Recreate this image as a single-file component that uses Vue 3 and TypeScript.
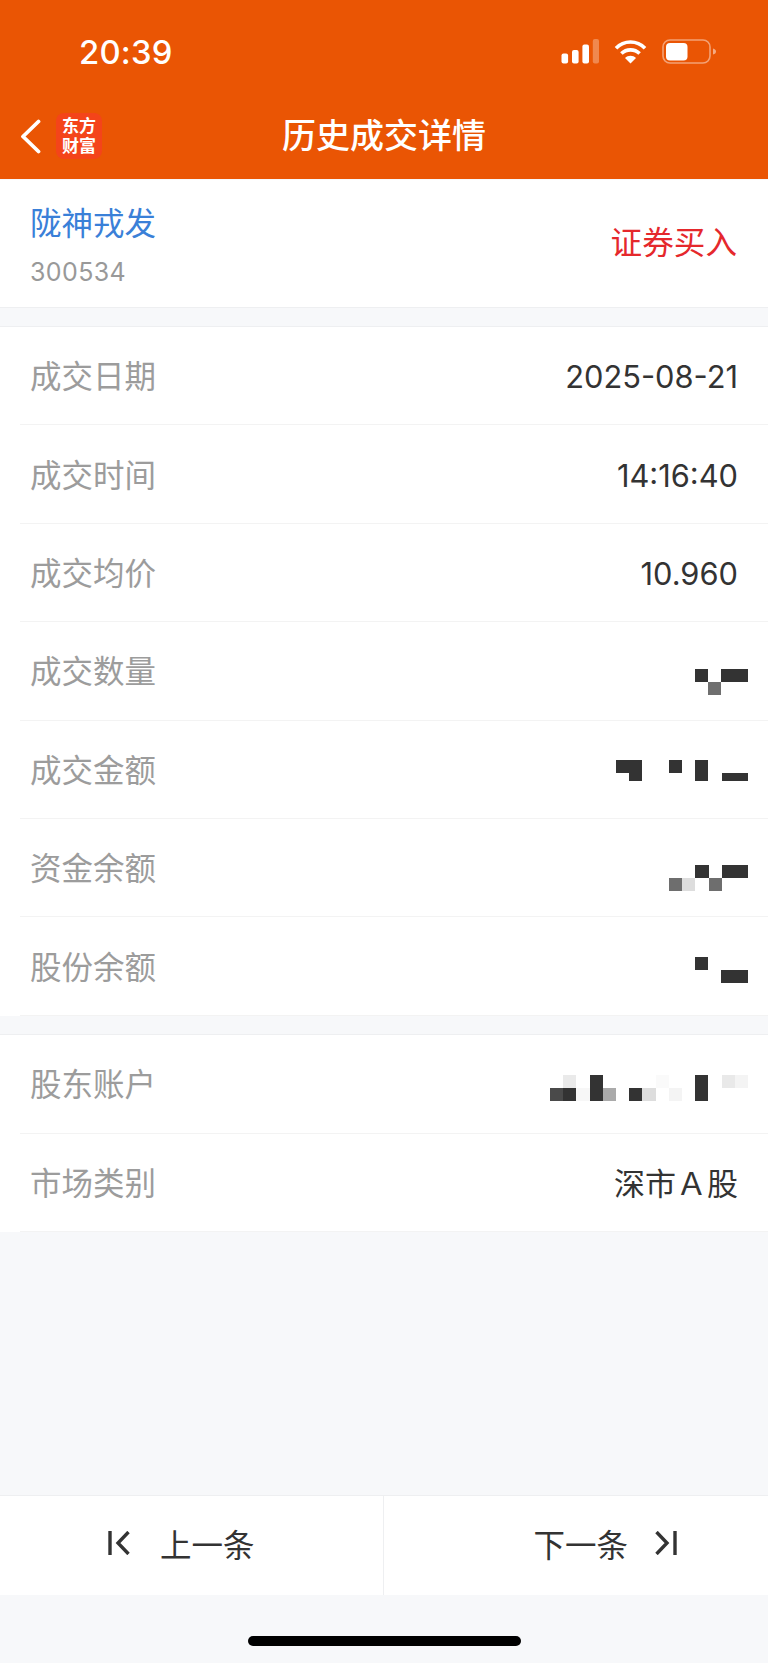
<script setup lang="ts">
type Cell = [number, number, string, number?]
interface Row { label: string; value?: string; cells?: Cell[]; cols?: number; low?: boolean }

const D = '#333333'
const CELL = 13.2
const tradeRows: Row[] = [
  { label: '成交日期', value: '2025-08-21' },
  { label: '成交时间', value: '14:16:40' },
  { label: '成交均价', value: '10.960' },
  { label: '成交数量', cols: 4, low: true, cells: [[3, 0, D], [2, 1, '#6f6f6f'], [1, 0, D], [0, 0, D]] },
  { label: '成交金额', cols: 10, cells: [[9, 0, D], [8, 0, D], [8, 1, D, 8], [5, 0, D], [3, 0, D], [3, 1, D, 8], [1, 1, D, 8], [0, 1, D, 8]] },
  { label: '资金余额', cols: 6, low: true, cells: [[5, 1, '#6e6e6e'], [4, 1, '#dddddd'], [3, 0, D], [2, 1, '#6e6e6e'], [1, 0, D], [0, 0, D]] },
  { label: '股份余额', cols: 4, cells: [[3, 0, D], [1, 1, D], [0, 1, D]] },
]
const accountCells: Cell[] = [
  [14, 1, '#4a4a4a'], [13, 0, '#eaeaea'], [13, 1, D], [12, 1, '#f7f7f7'],
  [11, 0, D], [11, 1, D], [10, 1, '#aaaaaa'],
  [8, 1, D], [7, 1, '#dddddd'], [6, 0, '#fafafa'], [5, 1, '#f4f4f4'],
  [3, 0, D], [3, 1, D], [1, 0, '#e9e9e9'], [0, 0, '#f4f4f4'],
]
const infoRows: Row[] = [
  { label: '股东账户', cols: 15, cells: accountCells },
  { label: '市场类别', value: '深市Ａ股' },
]
</script>

<template>
  <div class="page">
    <header class="top">
      <div class="status">
        <span class="time">20:39</span>
        <div class="status-icons">
          <svg class="signal" width="39" height="25" viewBox="0 0 39 25" fill="#fff">
            <rect x="1.5" y="14.5" width="6.6" height="10" rx="2" />
            <rect x="12" y="11" width="6.6" height="13.5" rx="2" />
            <rect x="22.4" y="5.5" width="6.6" height="19" rx="2" />
            <rect x="32.8" y="0" width="6.2" height="24.5" rx="2" opacity=".3" />
          </svg>
          <svg class="wifi" width="33" height="25" viewBox="0 0 33 25" fill="none" stroke="#fff" stroke-width="3.6">
            <path d="M2 9.2C10 1 23 1 31 9.2" />
            <path d="M7.4 14.6C12.4 9.6 20.6 9.6 25.6 14.6" />
            <path d="M11 19L16.5 24.4L22 19C19 16 14 16 11 19Z" fill="#fff" stroke="none" />
          </svg>
          <svg width="54" height="25" viewBox="0 0 54 25">
            <rect x="1" y="1" width="47" height="23" rx="7" fill="none" stroke="#fff" stroke-opacity=".45" stroke-width="1.6" />
            <rect x="4" y="4" width="21.5" height="17.5" rx="4" fill="#fff" />
            <path d="M51 9.5C53 10 54 11 54 12.5C54 14 53 15 51 15.5Z" fill="#fff" fill-opacity=".5" />
          </svg>
        </div>
      </div>
      <nav class="nav">
        <svg class="back" width="21" height="35" viewBox="0 0 21 35" fill="none" stroke="#fff" stroke-width="3.8" stroke-linecap="round" stroke-linejoin="round">
          <path d="M18.5 2.5L3 17.5L18.5 32.5" />
        </svg>
        <div class="logo"><span>东方</span><span>财富</span></div>
        <h1 class="title">历史成交详情</h1>
      </nav>
    </header>

    <main class="main">
      <section class="stock">
        <div class="stock-id">
          <div class="stock-name">陇神戎发</div>
          <div class="stock-code">300534</div>
        </div>
        <div class="stock-type">证券买入</div>
      </section>

      <section class="card">
        <div v-for="row in tradeRows" :key="row.label" class="row">
          <span class="label">{{ row.label }}</span>
          <span v-if="row.value" class="value">{{ row.value }}</span>
          <svg v-else class="mosaic" :class="{ low: row.low }" :width="(row.cols ?? 0) * CELL" :height="CELL * 2" shape-rendering="crispEdges">
            <rect v-for="(c, i) in row.cells" :key="i"
              :x="((row.cols ?? 0) - 1 - c[0]) * CELL" :y="c[1] * CELL"
              :width="CELL" :height="c[3] ?? CELL" :fill="c[2]" />
          </svg>
        </div>
      </section>

      <section class="card">
        <div v-for="row in infoRows" :key="row.label" class="row">
          <span class="label">{{ row.label }}</span>
          <span v-if="row.value" class="value cjk">{{ row.value }}</span>
          <svg v-else class="mosaic" :class="{ low: row.low }" :width="(row.cols ?? 0) * CELL" :height="CELL * 2" shape-rendering="crispEdges">
            <rect v-for="(c, i) in row.cells" :key="i"
              :x="((row.cols ?? 0) - 1 - c[0]) * CELL" :y="c[1] * CELL"
              :width="CELL" :height="c[3] ?? CELL" :fill="c[2]" />
          </svg>
        </div>
      </section>
    </main>

    <footer class="pager">
      <button class="btn prev">
        <svg width="23" height="24" viewBox="0 0 23 24" fill="none" stroke="#333" stroke-width="3.4">
          <path d="M2 0V24" />
          <path d="M20.5 1L10 12L20.5 23" />
        </svg>
        <span>上一条</span>
      </button>
      <button class="btn next">
        <span>下一条</span>
        <svg width="23" height="24" viewBox="0 0 23 24" fill="none" stroke="#333" stroke-width="3.4">
          <path d="M2.5 1L13 12L2.5 23" />
          <path d="M21 0V24" />
        </svg>
      </button>
    </footer>
    <div class="home-zone"><div class="home-bar"></div></div>
  </div>
</template>

<style>
html, body { margin: 0; background: #f7f8fa; }
</style>

<style scoped>
.page {
  width: 768px;
  height: 1663px;
  display: flex;
  flex-direction: column;
  background: #f7f8fa;
  font-family: Inter, "Noto Sans CJK SC", sans-serif;
  overflow: hidden;
}
.top { height: 179px; background: #ea5504; color: #fff; flex: none; box-sizing: border-box; }
.status { height: 100px; display: flex; justify-content: space-between; padding: 37px 52px 0 79px; box-sizing: border-box; }
.time { font-size: 32.8px; font-weight: 500; line-height: 30px; letter-spacing: .2px; }
.status-icons { display: flex; align-items: flex-start; padding-top: 2px; gap: 15px; }
.nav { position: relative; display: flex; align-items: center; height: 72px; padding-left: 20px; }
.back { flex: none; }
.logo {
  margin-left: 15px;
  width: 46px;
  height: 46px;
  border-radius: 8px;
  background: #f4441a;
  display: flex;
  flex-direction: column;
  align-items: center;
  justify-content: center;
  font-size: 17px;
  line-height: 20px;
  font-weight: 700;
  flex: none;
}
.title {
  position: absolute;
  left: 0;
  right: 0;
  top: 0;
  margin: 0;
  text-align: center;
  font-size: 34px;
  line-height: 72px;
  font-weight: 500;
}
.main { flex: 1; display: flex; flex-direction: column; gap: 18.5px; padding-top: 1px; }
.stock {
  height: 127.5px;
  padding: 0 31px 0 30px;
  background: #fff;
  display: flex;
  align-items: center;
  justify-content: space-between;
  border-bottom: 1px solid #eeeff1;
  box-sizing: border-box;
}
.stock-id { display: flex; flex-direction: column; gap: 10px; margin-top: 4px; }
.stock-name { font-size: 31.5px; line-height: 44px; color: #3a80d8; }
.stock-code { font-size: 25px; line-height: 32px; color: #999; letter-spacing: .4px; }
.stock-type { font-size: 31.6px; line-height: 44px; color: #e5282c; }
.card { background: #fff; padding-left: 20px; border-top: 1px solid #eeeff1; }
.row {
  height: 98.4px;
  padding-right: 30px;
  padding-left: 10px;
  display: flex;
  align-items: center;
  justify-content: space-between;
  border-bottom: 1px solid #f3f3f3;
  box-sizing: border-box;
}
.label { font-size: 31.5px; line-height: 44px; color: #9c9c9c; margin-top: 3px; }
.value { font-size: 30.8px; line-height: 44px; color: #333; margin-top: 3px; }
.value.cjk { font-size: 31px; }
.mosaic { display: block; flex: none; margin-right: -10px; margin-top: 8px; }
.mosaic.low { margin-top: 22px; }
.pager { flex: none; height: 100px; display: flex; background: #fff; border-top: 1px solid #eeeff1; box-sizing: border-box; }
.btn {
  flex: none;
  width: 50%;
  box-sizing: border-box;
  border: 0;
  margin: 0;
  background: none;
  display: flex;
  align-items: center;
  font-family: inherit;
  font-size: 31.5px;
  color: #333;
  padding: 0 0 5px;
}
.prev { padding-left: 108px; justify-content: flex-start; gap: 29px; border-right: 1px solid #eeeff1; }
.next { padding-right: 91px; justify-content: flex-end; gap: 26px; }
.home-zone { flex: none; height: 68px; display: flex; justify-content: center; padding-top: 41px; box-sizing: border-box; }
.home-bar { width: 273px; height: 10px; border-radius: 5px; background: #000; }
</style>
